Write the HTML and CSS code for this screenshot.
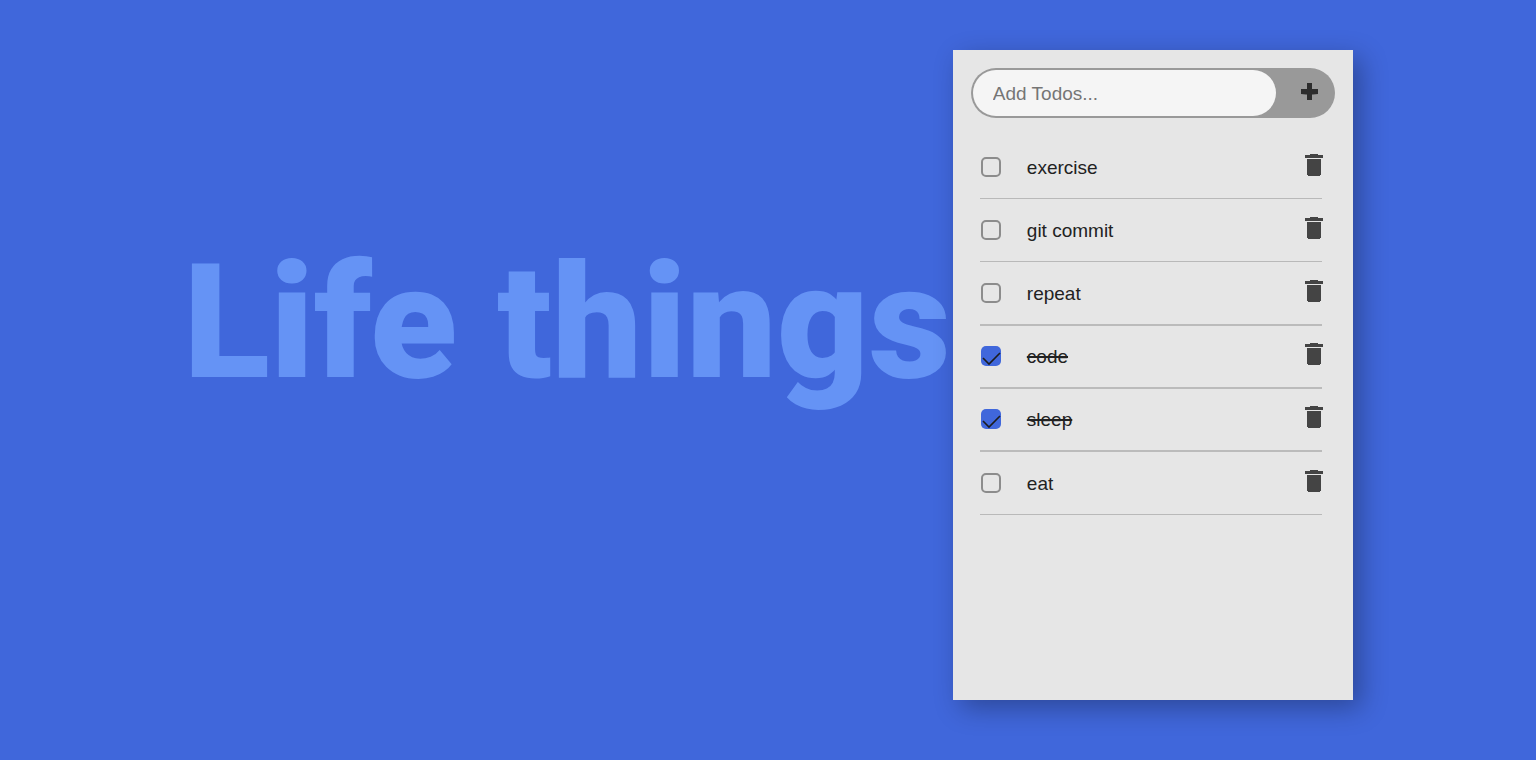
FILE: index.html
```html
<!DOCTYPE html>
<html lang="en">
<head>
<meta charset="utf-8">
<meta name="viewport" content="width=device-width, initial-scale=1">
<title>Life things</title>
<link rel="stylesheet" href="styles.css">
</head>
<body>
<svg class="sprite" aria-hidden="true">
  <symbol id="trash" viewBox="0 0 18 22"><path d="M5 0h8v1h5v3H0V1h5zM2 5h14v16h-1v1H3v-1H2z"/></symbol>
</svg>
<main class="page">
  <h1 class="title">Life things</h1>
  <section class="card">
    <form class="add">
      <input class="add-input" type="text" placeholder="Add Todos..." aria-label="Add Todos">
      <button class="add-button" type="button" aria-label="Add">
        <svg class="plus" viewBox="0 0 17 17" aria-hidden="true"><path d="M6 0h5v6h6v5l-5 .5h-1V17H6v-5.500H5L0 11V6h6z"/></svg>
      </button>
    </form>
    <ul class="list">
      <li class="item"><label class="todo"><input class="check" type="checkbox"><span class="text">exercise</span></label><button class="delete" type="button" aria-label="Delete exercise"><svg class="bin"><use href="#trash"/></svg></button></li>
      <li class="item"><label class="todo"><input class="check" type="checkbox"><span class="text">git commit</span></label><button class="delete" type="button" aria-label="Delete git commit"><svg class="bin"><use href="#trash"/></svg></button></li>
      <li class="item"><label class="todo"><input class="check" type="checkbox"><span class="text">repeat</span></label><button class="delete" type="button" aria-label="Delete repeat"><svg class="bin"><use href="#trash"/></svg></button></li>
      <li class="item"><label class="todo"><input class="check" type="checkbox" checked><span class="text">code</span></label><button class="delete" type="button" aria-label="Delete code"><svg class="bin"><use href="#trash"/></svg></button></li>
      <li class="item"><label class="todo"><input class="check" type="checkbox" checked><span class="text">sleep</span></label><button class="delete" type="button" aria-label="Delete sleep"><svg class="bin"><use href="#trash"/></svg></button></li>
      <li class="item"><label class="todo"><input class="check" type="checkbox"><span class="text">eat</span></label><button class="delete" type="button" aria-label="Delete eat"><svg class="bin"><use href="#trash"/></svg></button></li>
    </ul>
  </section>
</main>
</body>
</html>
```
FILE: styles.css
```css
* {
  box-sizing: border-box;
}

body {
  margin: 0;
  background: #4067db;
  color: #222;
  font-family: "Liberation Sans", Arial, sans-serif;
}

.sprite {
  display: none;
}

.page {
  display: flex;
  justify-content: center;
  align-items: flex-start;
  gap: 2px;
  min-height: 100vh;
  padding: 50px 0;
}

.title {
  margin: 179px 0 0;
  color: #6593f5;
  font-family: Roboto, sans-serif;
  font-size: 160px;
  font-weight: 900;
  line-height: 188px;
  white-space: nowrap;
}

.card {
  flex: 0 0 400px;
  min-height: 650px;
  padding: 18px;
  background: #e6e6e6;
  box-shadow: 8px 8px 25px rgba(0, 0, 0, 0.3);
}

.add {
  display: flex;
  height: 50px;
  padding: 2px;
  border-radius: 25px;
  background: #999;
}

.add-input {
  flex: 1;
  min-width: 0;
  padding: 2px 20px 0;
  border: 0;
  border-radius: 23px;
  background: #f5f5f5;
  color: #222;
  font: 19px "Liberation Sans", Arial, sans-serif;
}

.add-input::placeholder {
  color: #757575;
}

.add-button {
  display: flex;
  flex: 0 0 57px;
  justify-content: center;
  padding: 13px 0 0 10px;
  border: 0;
  background: transparent;
}

.plus {
  width: 17px;
  height: 17px;
  fill: #2d2d2d;
}

.list {
  display: grid;
  grid-auto-rows: 1fr;
  height: 379px;
  margin: 18px 13px 0 9px;
  padding: 0;
  list-style: none;
}

.item {
  display: flex;
  align-items: center;
  border-bottom: 1px solid #b9b9b9;
}

.item:nth-child(n+3):nth-child(-n+5) {
  border-bottom: 2px solid #bbb;
}

.todo {
  display: flex;
  flex: 1;
  align-items: center;
  gap: 26px;
  padding-left: 1px;
  font-size: 19px;
  line-height: 22px;
}

.text {
  padding-top: 2px;
}

.check {
  width: 20px;
  height: 20px;
  margin: 0;
  border: 2px solid #8c8c8c;
  border-radius: 5px;
  appearance: none;
}

.check:checked {
  border: 0;
  background: #4067db url("data:image/svg+xml,%3Csvg xmlns='http://www.w3.org/2000/svg' viewBox='0 0 20 20'%3E%3Cpath d='M2 12l6 6L19 7' fill='none' stroke='%231c1c1c' stroke-width='1.6'/%3E%3C/svg%3E");
}

.check:checked + .text {
  text-decoration: line-through 2px;
}

.delete {
  display: flex;
  margin: 0 -1px 4px 0;
  padding: 0;
  border: 0;
  background: transparent;
}

.bin {
  width: 18px;
  height: 22px;
  fill: #444;
}
```
